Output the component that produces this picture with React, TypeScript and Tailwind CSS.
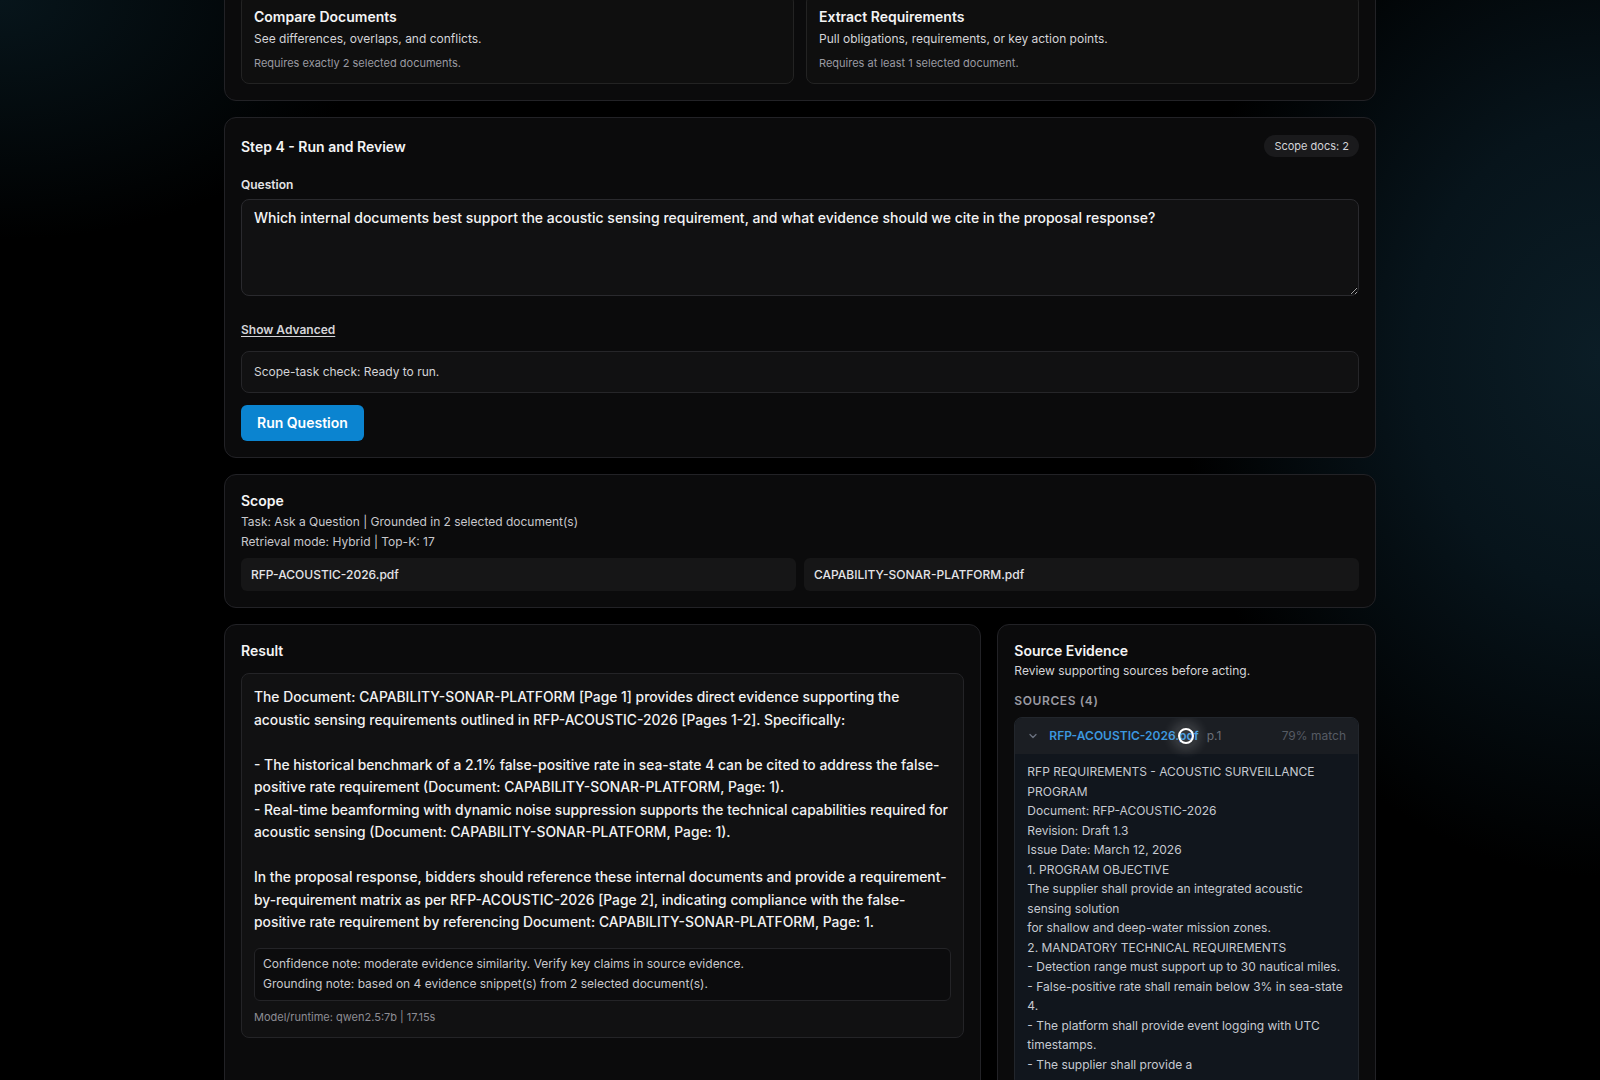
import React from "react";
import { ChevronDown } from "lucide-react";

const resultText = `The Document: CAPABILITY-SONAR-PLATFORM [Page 1] provides direct evidence supporting the acoustic sensing requirements outlined in RFP-ACOUSTIC-2026 [Pages 1-2]. Specifically:

- The historical benchmark of a 2.1% false-positive rate in sea-state 4 can be cited to address the false-positive rate requirement (Document: CAPABILITY-SONAR-PLATFORM, Page: 1).
- Real-time beamforming with dynamic noise suppression supports the technical capabilities required for acoustic sensing (Document: CAPABILITY-SONAR-PLATFORM, Page: 1).

In the proposal response, bidders should reference these internal documents and provide a requirement-by-requirement matrix as per RFP-ACOUSTIC-2026 [Page 2], indicating compliance with the false-positive rate requirement by referencing Document: CAPABILITY-SONAR-PLATFORM, Page: 1.`;

const sourceText = `RFP REQUIREMENTS - ACOUSTIC SURVEILLANCE PROGRAM
Document: RFP-ACOUSTIC-2026
Revision: Draft 1.3
Issue Date: March 12, 2026
1. PROGRAM OBJECTIVE
The supplier shall provide an integrated acoustic sensing solution
for shallow and deep-water mission zones.
2. MANDATORY TECHNICAL REQUIREMENTS
- Detection range must support up to 30 nautical miles.
- False-positive rate shall remain below 3% in sea-state 4.
- The platform shall provide event logging with UTC timestamps.
- The supplier shall provide a`;

function TaskCard({ title, desc, req }: { title: string; desc: string; req: string }) {
  return (
    <div className="rounded-lg border border-[#232323] bg-[#0f0f0f] px-3 pt-3 pb-3">
      <div className="text-[14px] leading-5 font-semibold text-[#f4f4f5]">{title}</div>
      <div className="mt-0.5 text-[12px] leading-5 text-[#d4d4d8]">{desc}</div>
      <div className="mt-1.5 text-[11px] leading-4 text-[#9a9aa2]">{req}</div>
    </div>
  );
}

function Panel({ children, className = "" }: { children: React.ReactNode; className?: string }) {
  return (
    <section className={`rounded-xl border border-[#222226] bg-[#0b0b0c] p-4 ${className}`}>{children}</section>
  );
}

export default function App() {
  return (
    <div className="relative h-[1080px] overflow-hidden bg-black bg-[radial-gradient(ellipse_420px_520px_at_100%_33%,#0b1d26_0%,#07141b_45%,transparent_100%)] font-['Inter',sans-serif] text-[#e5e5e5]">
      <div className="absolute inset-0 bg-[radial-gradient(ellipse_380px_240px_at_0%_0%,#07151b_0%,transparent_100%)]" />
      <div className="relative mx-auto flex w-[1152px] flex-col gap-4">
        {/* task choices (scrolled partly out of view) */}
        <Panel className="-mt-[23px]">
          <div className="grid grid-cols-2 gap-3">
            <TaskCard
              title="Compare Documents"
              desc="See differences, overlaps, and conflicts."
              req="Requires exactly 2 selected documents."
            />
            <TaskCard
              title="Extract Requirements"
              desc="Pull obligations, requirements, or key action points."
              req="Requires at least 1 selected document."
            />
          </div>
        </Panel>

        {/* step 4 */}
        <Panel>
          <div className="flex h-6 items-center justify-between">
            <h2 className="text-[14px] font-semibold text-[#f4f4f5]">Step 4 - Run and Review</h2>
            <span className="flex h-[22px] items-center rounded-full bg-[#1a1a1c] px-2.5 text-[11px] text-[#d4d4d8]">
              Scope docs: 2
            </span>
          </div>
          <div className="mt-[17px] text-[12px] leading-5 font-semibold text-[#e4e4e7]">Question</div>
          <textarea
            readOnly
            defaultValue="Which internal documents best support the acoustic sensing requirement, and what evidence should we cite in the proposal response?"
            className="mt-1 block h-[97px] w-full resize-y rounded-lg border border-[#2a2a2e] bg-[#111112] px-3 py-2 text-[14px] leading-5 font-medium text-[#f4f4f5] outline-none"
          />
          <button className="mt-[26px] block text-[12px] leading-4 font-semibold text-[#d4d4d8] underline underline-offset-2">
            Show Advanced
          </button>
          <div className="mt-[13px] rounded-lg border border-[#262629] bg-[#111112] px-3 py-3 text-[12px] leading-4 text-[#d4d4d8]">
            Scope-task check: Ready to run.
          </div>
          <button className="mt-3 rounded-md bg-[#0b84d0] px-4 py-2 text-[14px] leading-5 font-semibold text-white">
            Run Question
          </button>
        </Panel>

        {/* scope */}
        <Panel>
          <h2 className="text-[14px] leading-5 font-semibold text-[#f4f4f5]">Scope</h2>
          <p className="mt-px text-[12px] leading-5 text-[#c8c8cc]">Task: Ask a Question | Grounded in 2 selected document(s)</p>
          <p className="text-[12px] leading-5 text-[#c8c8cc]">Retrieval mode: Hybrid | Top-K: 17</p>
          <div className="mt-1.5 grid grid-cols-2 gap-2">
            <div className="flex h-[33px] items-center rounded-md bg-[#161617] px-2.5 text-[12px] font-medium text-[#e4e4e7]">
              RFP-ACOUSTIC-2026.pdf
            </div>
            <div className="flex h-[33px] items-center rounded-md bg-[#161617] px-2.5 text-[12px] font-medium text-[#e4e4e7]">
              CAPABILITY-SONAR-PLATFORM.pdf
            </div>
          </div>
        </Panel>

        {/* result + evidence */}
        <div className="grid grid-cols-[2fr_1fr] gap-4">
          <Panel className="h-[480px]">
            <h2 className="text-[14px] leading-5 font-semibold text-[#f4f4f5]">Result</h2>
            <div className="mt-3 rounded-lg border border-[#242427] bg-[#111112] p-3">
              <div className="whitespace-pre-wrap text-[13.85px] leading-[22.5px] font-medium text-[#f2f2f3]">{resultText}</div>
              <div className="mt-3.5 rounded-md border border-[#242427] bg-[#0c0c0d] px-2 py-[5px] text-[12px] leading-[20.5px] text-[#c8c8cc]">
                <div>Confidence note: moderate evidence similarity. Verify key claims in source evidence.</div>
                <div>Grounding note: based on 4 evidence snippet(s) from 2 selected document(s).</div>
              </div>
              <div className="mt-2 text-[11px] leading-4 text-[#8d8d94]">Model/runtime: qwen2.5:7b | 17.15s</div>
            </div>
          </Panel>

          <Panel className="h-[480px]">
            <h2 className="text-[14px] leading-5 font-semibold text-[#f4f4f5]">Source Evidence</h2>
            <p className="text-[12px] leading-5 text-[#d4d4d8]">Review supporting sources before acting.</p>
            <div className="mt-3 text-[12px] leading-4 font-semibold tracking-wider text-[#9a9aa2]">SOURCES (4)</div>
            <div className="mt-2 overflow-hidden rounded-lg border border-[#22262c] bg-[#11161d]">
              <div className="relative flex h-9 items-center bg-[#1b1e23] pr-3 pl-3">
                <ChevronDown className="h-3 w-3 text-[#6b7280]" strokeWidth={2.5} />
                <span className="ml-2.5 text-[12px] font-semibold text-[#3b97df]">RFP-ACOUSTIC-2026.pdf</span>
                <span className="ml-2 text-[12px] text-[#6b7079]">p.1</span>
                <span className="ml-auto text-[12px] text-[#565b63]">79% match</span>
                {/* click ring */}
                <span className="pointer-events-none absolute top-1/2 left-[171px] h-[24px] w-[24px] -translate-x-1/2 -translate-y-1/2 rounded-full bg-white/10 shadow-[0_0_10px_4px_rgba(255,255,255,0.12)]" />
                <span className="pointer-events-none absolute top-1/2 left-[171px] h-[16px] w-[16px] -translate-x-1/2 -translate-y-1/2 rounded-full border-2 border-white" />
              </div>
              <div className="whitespace-pre-line px-3 pt-2 pb-3 text-[12px] leading-[19.5px] text-[#c6cad1]">
                {sourceText}
              </div>
            </div>
          </Panel>
        </div>
      </div>
    </div>
  );
}
